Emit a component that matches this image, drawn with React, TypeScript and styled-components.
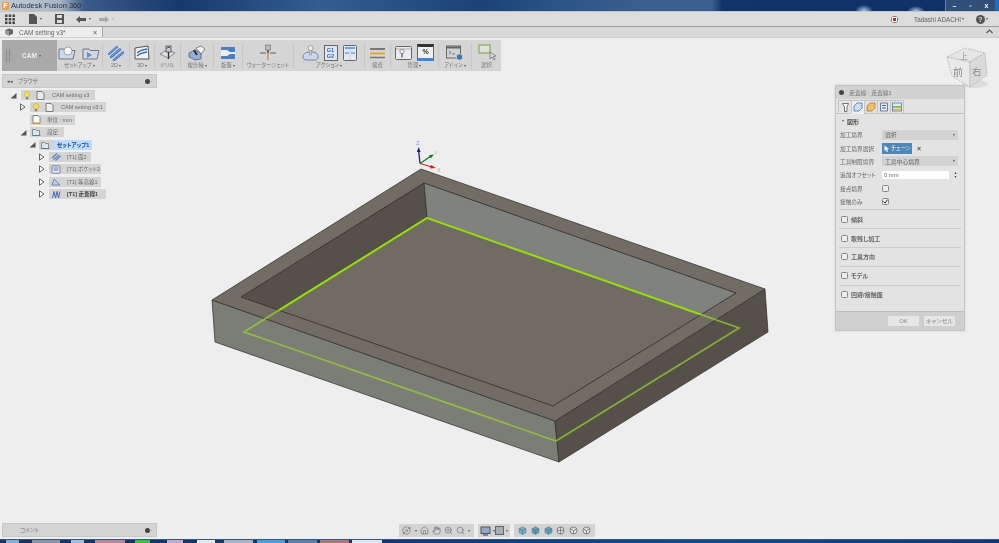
import React from "react";
import styled, { createGlobalStyle } from "styled-components";
import { Hand, Home, Orbit, Search, ZoomIn } from "lucide-react";

const FONT = `"Liberation Sans", "Noto Sans CJK JP", sans-serif`;

const Global = createGlobalStyle`
  html, body { margin: 0; padding: 0; background: #eeeeee; overflow: hidden; }
  * { box-sizing: border-box; }
`;

const Page = styled.div`
  width: 999px;
  height: 543px;
  display: flex;
  flex-direction: column;
  overflow: hidden;
  font-family: ${FONT};
  font-feature-settings: "palt";
  color: #666;
  filter: blur(0.3px);
`;

/* ---------- window chrome ---------- */
const TitleBar = styled.div`
  height: 11px;
  flex: none;
  display: flex;
  align-items: center;
  padding-left: 2px;
  gap: 2px;
  background:
    radial-gradient(ellipse 9px 6px at 864px 11px, #b5cfe6 0, transparent 100%),
    radial-gradient(ellipse 9px 6px at 916px 12px, #cfe0ee 0, transparent 100%),
    linear-gradient(90deg, #c2ccd8 0, #a8b5c5 60px, #3a5a88 85px, #17396c 180px, #345d92 320px, #1c4277 480px, #2c5485 560px, #3a5f8f 640px, #3a5f8f 712px, #12346a 722px, #0f3068 999px);
`;

const AppLogo = styled.span`
  width: 7px;
  height: 8px;
  background: #e9a04a;
  color: #fff;
  font-size: 7px;
  font-weight: bold;
  line-height: 8px;
  text-align: center;
`;

const TitleText = styled.span`
  font-size: 7.5px;
  color: #2b3440;
`;

const WindowButtons = styled.div`
  margin-left: auto;
  width: 50px;
  height: 11px;
  display: flex;
  align-items: center;
  justify-content: space-around;
  background: #2f4f78;
  border-left: 1px solid #6c86a6;
  color: #fff;
  font-size: 7px;
  line-height: 1;
  font-weight: bold;
`;

const WindowSliver = styled.div`
  width: 4px;
  height: 11px;
  margin-left: -2px;
  background: #1f6fc0;
  flex: none;
`;

const QuickBar = styled.div`
  height: 16px;
  flex: none;
  display: flex;
  align-items: center;
  padding: 0 2px 0 5px;
  background: #dcdcdc;
  border-top: 1px solid #c4c4c4;
  border-bottom: 1px solid #9c9c9c;
`;

const QuickSlot = styled.div<{ $w: number }>`
  width: ${(p) => p.$w}px;
  display: flex;
  align-items: center;
  gap: 2px;
  flex: none;
`;

const Caret = styled.span<{ $light?: boolean }>`
  display: inline-block;
  width: 0;
  height: 0;
  border-left: 1.8px solid transparent;
  border-right: 1.8px solid transparent;
  border-top: 2.4px solid ${(p) => (p.$light ? "#aaa" : "#555")};
  margin-left: 1px;
  vertical-align: middle;
`;

const UserArea = styled.div`
  margin-left: auto;
  display: flex;
  align-items: center;
  font-size: 6.3px;
  color: #5f5f5f;
`;

const RecordDot = styled.span`
  width: 7px;
  height: 7px;
  border-radius: 50%;
  background: radial-gradient(circle, #e01a1a 0 1.8px, #fff 2px 2.8px, #777 3px);
  margin-right: 16px;
`;

const HelpDot = styled.span`
  width: 9px;
  height: 9px;
  border-radius: 50%;
  background: #555;
  color: #ddd;
  font-size: 7px;
  line-height: 9px;
  font-weight: bold;
  text-align: center;
  margin-left: 12px;
`;

const UserEnd = styled.span`
  width: 9px;
`;

const TabBar = styled.div`
  height: 11px;
  flex: none;
  display: flex;
  align-items: stretch;
  background: #d9d9d9;
  border-bottom: 1px solid #cfcfcf;
`;

const Tab = styled.div`
  width: 103px;
  display: flex;
  align-items: center;
  padding: 0 2px 0 5px;
  background: #ededed;
  border-right: 1px solid #a8a8a8;
  font-size: 6.5px;
  color: #666;
  gap: 5px;
`;

const TabClose = styled.span`
  margin-left: auto;
  margin-right: 3px;
  font-size: 7px;
  font-weight: bold;
  color: #777;
`;

const TabChevron = styled.div`
  margin-left: auto;
  width: 20px;
  text-align: center;
  svg { display: block; margin: 2px auto 0; }
`;

/* ---------- viewport ---------- */
const Viewport = styled.div`
  flex: 1;
  position: relative;
  background: #eeeeee;
`;

const Scene = styled.svg`
  position: absolute;
  inset: 0;
  width: 100%;
  height: 100%;
`;

const Ribbon = styled.div`
  position: absolute;
  left: 2px;
  top: 2px;
  height: 31px;
  display: flex;
  background: #d5d5d5;
`;

const CamButton = styled.div`
  width: 55px;
  background: #a9a9a9;
  display: flex;
  align-items: center;
  justify-content: center;
  color: #eee;
  font-size: 6.5px;
  font-weight: bold;
  gap: 1px;
  padding-left: 4px;
  position: relative;
  &::before {
    content: "";
    position: absolute;
    left: 4px;
    top: 9px;
    bottom: 9px;
    width: 2px;
    border-left: 1px solid #8a8a8a;
    border-right: 1px solid #8a8a8a;
  }
`;

const Group = styled.div<{ $w: number }>`
  width: ${(p) => p.$w}px;
  height: 26px;
  margin-top: 3px;
  flex: none;
  display: flex;
  flex-direction: column;
  align-items: center;
  border-right: 1px solid #c6c6c6;
  &:last-child { border-right: 0; }
`;

const IconRow = styled.div`
  height: 20px;
  display: flex;
  align-items: center;
  justify-content: center;
  gap: 5px;
`;

const GroupLabel = styled.div`
  font-size: 5.4px;
  line-height: 7px;
  color: #777;
  white-space: nowrap;
`;

const BrowserBar = styled.div<{ $top?: number; $bottom?: number }>`
  position: absolute;
  left: 2px;
  width: 155px;
  height: 14px;
  ${(p) => (p.$top !== undefined ? `top: ${p.$top}px;` : "")}
  ${(p) => (p.$bottom !== undefined ? `bottom: ${p.$bottom}px;` : "")}
  display: flex;
  align-items: center;
  padding: 0 3px 0 4px;
  background: #d4d4d4;
  border: 1px solid #c8c8c8;
  font-size: 5.5px;
  color: #777;
  gap: 5px;
`;

const BarArrows = styled.span`
  font-size: 5px;
  color: #444;
`;

const BarSpacer = styled.span`
  width: 8px;
`;

const PinDot = styled.span`
  margin-left: auto;
  width: 5px;
  height: 5px;
  border-radius: 50%;
  background: #444;
  box-shadow: 4px 0 0 -2px #999;
  margin-right: 3px;
`;

const TitleDot = styled.span`
  width: 5px;
  height: 5px;
  border-radius: 50%;
  background: #444;
`;

const Tree = styled.div`
  position: absolute;
  left: 0;
  top: 52px;
  display: flex;
  flex-direction: column;
  gap: 2.4px;
`;

const Row = styled.div<{ $indent: number }>`
  height: 10px;
  display: flex;
  align-items: center;
  padding-left: ${(p) => p.$indent}px;
`;

const Expander = styled.span<{ $w: number }>`
  width: ${(p) => p.$w}px;
  display: flex;
  justify-content: flex-start;
  flex: none;
`;

const Chip = styled.div<{ $w: number; $gap?: number }>`
  width: ${(p) => p.$w}px;
  height: 10px;
  background: #d4d4d4;
  display: flex;
  align-items: center;
  gap: ${(p) => p.$gap ?? 4}px;
  padding-left: 2px;
  font-size: 5.5px;
  color: #6b6b6b;
  white-space: nowrap;
`;

const ChipText = styled.span<{ $active?: boolean; $bold?: boolean }>`
  margin-left: 2px;
  ${(p) => p.$active && `background:#bddcff;color:#1a3f7a;font-weight:bold;padding:0 3px;height:10px;line-height:10px;margin-left:0;flex:1;`}
  ${(p) => p.$bold && `color:#444;font-weight:bold;`}
`;

/* ---------- parameter panel ---------- */
const Panel = styled.div`
  position: absolute;
  left: 835px;
  top: 47px;
  width: 130px;
  height: 246px;
  display: flex;
  flex-direction: column;
  background: #e3e3e3;
  border: 1px solid #c4c4c4;
  box-shadow: 0 0 2px #ccc;
`;

const PanelTitle = styled.div`
  height: 13px;
  flex: none;
  display: flex;
  align-items: center;
  gap: 5px;
  padding-left: 3px;
  background: #d2d2d2;
  font-size: 5.8px;
  color: #777;
`;

const PanelTabs = styled.div`
  height: 15px;
  flex: none;
  display: flex;
  padding: 1px 0 0 2px;
  border-bottom: 1px solid #c0c0c0;
`;

const PanelTab = styled.div<{ $active?: boolean }>`
  width: 14px;
  height: 14px;
  display: flex;
  align-items: center;
  justify-content: center;
  background: ${(p) => (p.$active ? "#efefef" : "#e3e3e3")};
  border: 1px solid #c4c4c4;
  margin-right: -1px;
  ${(p) => p.$active && "border-bottom-color:#efefef;"}
`;

const SectionHead = styled.div`
  height: 14px;
  display: flex;
  align-items: center;
  gap: 3px;
  padding: 0 0 0 5px;
  font-size: 6px;
  color: #555;
  font-weight: bold;
`;

const FormRow = styled.div`
  height: 13.4px;
  display: grid;
  grid-template-columns: 42px 76px;
  align-items: center;
  padding-left: 4px;
  font-size: 5.7px;
  color: #666;
  white-space: nowrap;
`;

const SelectBox = styled.div`
  height: 10px;
  background: #d2d2d2;
  display: flex;
  align-items: center;
  justify-content: space-between;
  padding: 0 3px;
  font-size: 5.8px;
`;

const ChainCell = styled.div`
  display: flex;
  align-items: center;
  gap: 5px;
`;

const ChainButton = styled.div`
  width: 30px;
  height: 11px;
  background: #4f87b8;
  color: #eef;
  display: flex;
  align-items: center;
  gap: 2px;
  padding-left: 2px;
  font-size: 5.6px;
  white-space: nowrap;
`;

const CrossMark = styled.span`
  font-size: 7px;
  font-weight: bold;
  color: #555;
`;

const OffsetCell = styled.div`
  display: flex;
  align-items: center;
  justify-content: space-between;
`;

const OffsetInput = styled.div`
  width: 67px;
  height: 8px;
  background: #fff;
  padding-left: 2px;
  font-size: 5.8px;
  line-height: 8px;
`;

const Stepper = styled.div`
  width: 5px;
  font-size: 3.5px;
  line-height: 4px;
  color: #444;
  text-align: center;
`;

const Check = styled.div`
  width: 7px;
  height: 7px;
  border: 1px solid #888;
  border-radius: 1.5px;
  background: #ececec;
  display: flex;
  align-items: center;
  justify-content: center;
  flex: none;
`;

const Collapsed = styled.div<{ $first?: boolean }>`
  height: 18.8px;
  margin: 0 3px;
  display: flex;
  align-items: center;
  gap: 3px;
  padding-left: 2px;
  border-top: 1px solid #cdcdcd;
  font-size: 6px;
  font-weight: bold;
  color: #666;
  ${(p) => p.$first && "margin-top: 1px;"}
`;

const PanelFooter = styled.div`
  margin-top: auto;
  height: 19px;
  flex: none;
  display: flex;
  justify-content: flex-end;
  align-items: center;
  gap: 5px;
  padding-right: 9px;
  background: #cfcfcf;
  border-top: 1px solid #bdbdbd;
`;

const FooterButton = styled.div`
  width: 31px;
  height: 10px;
  background: #e6e6e6;
  text-align: center;
  font-size: 6px;
  line-height: 10px;
  color: #8a8a8a;
`;

/* ---------- nav bar and taskbar ---------- */
const NavBar = styled.div`
  position: absolute;
  left: 399px;
  bottom: 2px;
  display: flex;
  gap: 4px;
  svg { display: block; flex: none; }
`;

const NavGroup = styled.div<{ $w: number }>`
  width: ${(p) => p.$w}px;
  height: 13px;
  display: flex;
  align-items: center;
  justify-content: space-around;
  padding: 0 2px;
  background: #d3d3d3;
  color: #5c6670;
`;

const TaskBar = styled.div`
  height: 4px;
  flex: none;
  display: flex;
  background: linear-gradient(90deg, #16345e 0, #123a70 400px, #0f4a8a 700px, #123a70 999px);
  border-top: 1px solid #33557f;
`;

const TaskItem = styled.div<{ $x: number; $w: number; $c: string }>`
  width: ${(p) => p.$w}px;
  margin-left: ${(p) => p.$x}px;
  flex: none;
  background: ${(p) => p.$c};
`;

/* ---------- icons ---------- */
const I = ({ w = 16, h = 16, children }: { w?: number; h?: number; children: React.ReactNode }) => (
  <svg width={w} height={h} viewBox={`0 0 ${w} ${h}`} style={{ display: "block", flex: "none" }}>
    {children}
  </svg>
);

const Bulb = () => (
  <I w={8} h={9}>
    <circle cx="4" cy="3.4" r="2.8" fill="#f3de5a" stroke="#b9a52e" strokeWidth=".5" />
    <rect x="2.8" y="6" width="2.4" height="2.4" fill="#888" />
  </I>
);
const Tri = ({ open }: { open?: boolean }) =>
  open ? (
    <I w={7} h={7}>
      <path d="M6.5 1v5.5H.5z" fill="#555" />
    </I>
  ) : (
    <I w={7} h={8}>
      <path d="M1.5.8 6 4 1.5 7.2z" fill="#fff" stroke="#444" strokeWidth=".8" />
    </I>
  );
const FolderSm = ({ c = "#dfe5ec" }: { c?: string }) => (
  <I w={9} h={8}>
    <path d="M.5 1.5h3l1 1h3v5h-7z" fill={c} stroke="#5a6a80" strokeWidth=".7" />
    <path d="M.5 7.5h8" stroke="#4a78b0" strokeWidth=".8" />
  </I>
);
const Doc = ({ c = "#fff", mark }: { c?: string; mark?: boolean }) => (
  <I w={9} h={9}>
    <path d="M1 .5h5l2 2v6H1z" fill={c} stroke="#555" strokeWidth=".7" />
    {mark && <path d="M1 8h7" stroke="#e2a72e" strokeWidth="1.4" />}
  </I>
);
const Hatch = ({ c = "#4f7fc0" }: { c?: string }) => (
  <I w={10} h={9}>
    <path d="M1 6 6 1.5M2.5 7.5 8 3M4.5 8.500 9.500 4" stroke={c} strokeWidth="1.3" />
  </I>
);

const OpIcon = ({ kind }: { kind: number }) => {
  if (kind === 0) return <Hatch c="#5f86bb" />;
  if (kind === 1)
    return (
      <I w={10} h={9}>
        <rect x="1" y=".8" width="8" height="7.4" rx="1" fill="#eef" stroke="#556" strokeWidth=".7" />
        <path d="M2.500 3h5M2.500 5h5" stroke="#3e78c2" />
      </I>
    );
  if (kind === 2)
    return (
      <I w={10} h={9}>
        <path d="M1 8 3 2l3 3 3 3z" fill="#b7cdea" stroke="#4a70a8" strokeWidth=".7" />
      </I>
    );
  return (
    <I w={10} h={9}>
      <path d="M1.500 8 3 1.500 4.500 8 6 1.500 7.500 8 9 1.500" fill="none" stroke="#3f6fb5" strokeWidth="1" />
    </I>
  );
};

const RFolder = ({ open }: { open?: boolean }) => (
  <I w={19} h={14}>
    <path d="M1 3h6l1.500 1.500H17l-2 8.500H1z" fill={open ? "#c9d9ea" : "#cfd8e4"} stroke="#55606e" strokeWidth=".8" />
    {open ? (
      <circle cx="10" cy="5" r="4" fill="#f6f6f6" stroke="#777" strokeWidth=".6" />
    ) : (
      <path d="M5 6l5 3-5 3z" fill="#5a93cc" />
    )}
  </I>
);
const R2D = () => (
  <I w={16} h={16}>
    <path d="M1 9 9 2M3 12l9-7.500M6 15l9-7.500" stroke="#3c6fc0" strokeWidth="2.300" strokeLinecap="round" />
    <path d="M1 9 9 2M3 12l9-7.500M6 15l9-7.500" stroke="#a4c2ea" strokeWidth=".7" strokeLinecap="round" />
  </I>
);
const R3D = () => (
  <I w={16} h={16}>
    <path d="M1 3 14 1l1 13H1z" fill="#eef2f6" stroke="#555" strokeWidth="1" />
    <path d="M3 8c3-3 6-3 10-4M3 11c3-3 6-3 10-4" fill="none" stroke="#3c6fc0" strokeWidth="1.400" />
  </I>
);
const RDrill = () => (
  <I w={17} h={16}>
    <path d="M1 9l7-4 8 3-7 5z" fill="#dfe4ea" stroke="#666" strokeWidth=".7" />
    <rect x="7" y="1" width="5" height="6" fill="#ccc" stroke="#444" strokeWidth=".8" />
    <path d="M9.500 7v7" stroke="#333" strokeWidth="1.400" />
    <path d="M8 3l3-1" stroke="#345" />
  </I>
);
const RMulti = () => (
  <I w={18} h={16}>
    <path d="M1 8l6-3 6 3v6l-6 1-6-3z" fill="#8fb0dc" stroke="#456" strokeWidth=".7" />
    <path d="M8 3l5-2 4 3-4 5z" fill="#f4f4f4" stroke="#555" strokeWidth=".7" />
    <path d="M6 5l3 5" stroke="#333" strokeWidth="2" />
  </I>
);
const RLathe = () => (
  <I w={16} h={14}>
    <path d="M1 1h14v12H1z" fill="#4a7fc0" />
    <path d="M1 4h6l3 2h5v2h-5L7 10H1z" fill="#e7edf3" />
  </I>
);
const RJet = () => (
  <I w={18} h={17}>
    <path d="M1 9h6M11 9h6" stroke="#888" strokeWidth="1.400" />
    <rect x="6.500" y="1" width="5" height="5" fill="#bbb" stroke="#666" strokeWidth=".6" />
    <path d="M9 6v3" stroke="#666" strokeWidth="2" />
    <path d="M9 9v7" stroke="#d9704d" strokeWidth="1.200" />
  </I>
);
const RAction = () => (
  <I w={17} h={16}>
    <path d="M1 12c0-4 4-5 8-5s7 1 7 5-4 3-8 3-7 0-7-3z" fill="#c8d9ee" stroke="#5a7090" strokeWidth=".8" />
    <rect x="7.500" y="3" width="2" height="7" fill="#ccc" stroke="#777" strokeWidth=".4" />
    <circle cx="8.500" cy="3" r="2.500" fill="#eee" stroke="#777" strokeWidth=".6" />
  </I>
);
const RCode = styled.div`
  width: 14px;
  height: 16px;
  border: 1px solid #666;
  background: #dde6f2;
  color: #3268b8;
  font-size: 5.5px;
  font-weight: bold;
  line-height: 6.5px;
  text-align: center;
  padding-top: 1px;
`;
const RSheet = () => (
  <I w={14} h={16}>
    <rect x=".5" y=".5" width="13" height="15" rx="1" fill="#dfe8f3" stroke="#666" />
    <path d="M2 3h10" stroke="#3f86d6" strokeWidth="1.400" />
    <path d="M2 8h4M8 8h4" stroke="#3f86d6" strokeWidth="1" />
    <path d="M7 4v11" stroke="#bbc" strokeWidth=".5" />
  </I>
);
const RInspect = () => (
  <I w={17} h={12}>
    <path d="M1 2h15" stroke="#777" strokeWidth="2" />
    <path d="M1 6.500h15" stroke="#e2a72e" strokeWidth="2" />
    <path d="M1 10.500h15" stroke="#777" strokeWidth="1.500" />
  </I>
);
const RManage = () => (
  <I w={17} h={15}>
    <rect x=".5" y="1.500" width="16" height="13" rx="1" fill="#e9edf2" stroke="#666" />
    <path d="M1 4h15" stroke="#aaa" />
    <circle cx="7" cy="6.500" r="2.200" fill="#eee" stroke="#777" strokeWidth=".7" />
    <path d="M7 8.500v4" stroke="#555" strokeWidth="1.200" />
  </I>
);
const RPercent = styled.div`
  width: 17px;
  height: 17px;
  border: 1px solid #666;
  border-top: 3px solid #333;
  border-bottom: 3px solid #3f86d6;
  background: #f0f0f0;
  color: #333;
  font-size: 7px;
  font-weight: bold;
  line-height: 10px;
  text-align: center;
`;
const RAddin = () => (
  <I w={18} h={16}>
    <rect x=".5" y="1" width="14" height="12" fill="#cfd3d8" stroke="#666" />
    <path d="M1 2.500h13" stroke="#666" strokeWidth="2" />
    <path d="M3 6l2 1.500L3 9M6 9h3" stroke="#555" strokeWidth=".7" fill="none" />
    <circle cx="13.500" cy="12" r="3.200" fill="#3f74b0" stroke="#eee" strokeWidth=".6" />
  </I>
);
const RSelect = () => (
  <I w={18} h={17}>
    <rect x="1" y="1" width="11" height="8" fill="#e0e0e0" stroke="#86ac5a" strokeWidth="1.200" />
    <path d="M12 8v7l2-2 2 3 1-.5-1.700-3 2.500-.5z" fill="#ddd" stroke="#555" strokeWidth=".6" />
  </I>
);
const NavCube = ({ c }: { c: string }) => (
  <I w={9} h={9}>
    <path d="M4.500.8 8 2.700v3.800L4.500 8.400 1 6.500V2.700z" fill={c} stroke="#667" strokeWidth=".5" />
    <path d="M1 2.700 4.500 4.600 8 2.700M4.500 4.600v3.800" fill="none" stroke="#3f6d80" strokeWidth=".5" />
  </I>
);
const NavWire = ({ cross }: { cross?: boolean }) => (
  <I w={9} h={9}>
    <circle cx="4.500" cy="4.500" r="3.500" fill="#e0e0e0" stroke="#6a6a6a" strokeWidth=".8" />
    {cross ? (
      <path d="M1 4.500h7M4.500 1v7" stroke="#6a6a6a" strokeWidth=".7" />
    ) : (
      <path d="M1.500 3 4.500 4.600 7.500 3M4.500 4.600V8" fill="none" stroke="#6a6a6a" strokeWidth=".7" />
    )}
  </I>
);

const ribbon: { w: number; label: string; caret?: boolean; icons: React.ReactNode }[] = [
  { w: 46, label: "セットアップ", caret: true, icons: <><RFolder open /><RFolder /></> },
  { w: 27, label: "2D", caret: true, icons: <R2D /> },
  { w: 25, label: "3D", caret: true, icons: <R3D /> },
  { w: 26, label: "ドリル", icons: <RDrill /> },
  { w: 33, label: "複合軸", caret: true, icons: <RMulti /> },
  { w: 29, label: "旋盤", caret: true, icons: <RLathe /> },
  { w: 51, label: "ウォータージェット", icons: <RJet /> },
  { w: 71, label: "アクション", caret: true, icons: <><RAction /><RCode>G1<br />G2</RCode><RSheet /></> },
  { w: 26, label: "検査", icons: <RInspect /> },
  { w: 48, label: "管理", caret: true, icons: <><RManage /><RPercent>%</RPercent></> },
  { w: 33, label: "アドイン", caret: true, icons: <RAddin /> },
  { w: 29, label: "選択", icons: <RSelect /> },
];

const operations = [
  { label: "[T1] 面2", w: 42, kind: 0 },
  { label: "[T1] ポケット2", w: 52, kind: 1 },
  { label: "[T1] 等高線1", w: 52, kind: 2 },
  { label: "[T1] 走査線1", w: 57, kind: 3, bold: true },
];

const collapsed = ["傾斜", "取残し加工", "工具方向", "モデル", "回避/接触面"];

const AxisLabel = styled.text`
  font-family: ${FONT};
  font-size: 5.5px;
`;

const CubeLabel = styled.text`
  font-family: "Noto Sans CJK JP", sans-serif;
  fill: #8c8c8c;
`;

const SceneArt = () => (
  <Scene viewBox="0 38 999 501">
    <defs>
      <clipPath id="pocket">
        <polygon points="424,183 736,293 553,406 241,297" />
      </clipPath>
    </defs>
    {/* outer side faces */}
    <polygon points="212,300 555,421 559,462 215,342" fill="#7b7d77" stroke="#2e2c28" strokeWidth=".7" />
    <polygon points="555,421 765,289 768,332 559,462" fill="#55514a" stroke="#2e2c28" strokeWidth=".7" />
    {/* rim */}
    <polygon points="421,169 765,289 555,421 212,300" fill="#716d65" stroke="#2e2c28" strokeWidth=".7" />
    {/* pocket */}
    <g clipPath="url(#pocket)">
      <polygon points="424,183 241,297 244,332 427,218" fill="#55514a" />
      <polygon points="424,183 736,293 739,328 427,218" fill="#80837d" />
      <polygon points="427,218 739,328 556,441 244,332" fill="#706c64" />
      <path d="M424 183 427 218" stroke="#2e2c28" strokeWidth=".8" />
    </g>
    <polygon points="424,183 736,293 553,406 241,297" fill="none" stroke="#2e2c28" strokeWidth=".8" />
    {/* tool boundary */}
    <polygon points="427,218 739,328 556,441 244,332" fill="none" stroke="#9cd42a" strokeWidth="1.800" opacity=".7" />
    <g clipPath="url(#pocket)">
      <path d="M244 332 427 218 739 328" fill="none" stroke="#93e000" strokeWidth="1.800" />
    </g>
    {/* axis triad */}
    <path d="M420 163.500 418.700 151" stroke="#1c1c8c" strokeWidth="1.300" />
    <path d="M418.700 147 416.800 152h3.800z" fill="#1c1c8c" />
    <path d="M420 163.500 431 156" stroke="#0d7a1f" strokeWidth="1.300" />
    <path d="M434 154.500 428.800 155.300l2 3z" fill="#0d7a1f" />
    <path d="M420 163.500 432 167" stroke="#cc2222" strokeWidth="1.300" />
    <path d="M436 168 431 165l-1 3.500z" fill="#cc2222" />
    <AxisLabel x="416.300" y="144.500" fill="#8a8ae0">Z</AxisLabel>
    <AxisLabel x="434" y="155" fill="#8fe09a">Y</AxisLabel>
    <AxisLabel x="437" y="171.500" fill="#f09090">X</AxisLabel>
    {/* view cube */}
    <ellipse cx="975" cy="84" rx="13" ry="4" fill="#dcdcdc" />
    <polygon points="965,48 985,53 970,62 947,57" fill="#e6e6e6" stroke="#b4b4b4" strokeWidth=".8" strokeDasharray="2 1" />
    <polygon points="947,57 970,62 970,87 952,76" fill="#e9e9e9" stroke="#b4b4b4" strokeWidth=".8" strokeDasharray="2 1" />
    <polygon points="970,62 985,53 987,75 970,87" fill="#dadada" stroke="#b4b4b4" strokeWidth=".8" strokeDasharray="2 1" />
    <CubeLabel x="953" y="76" fontSize="10">前</CubeLabel>
    <CubeLabel x="972" y="75" fontSize="9.500">右</CubeLabel>
    <CubeLabel x="960" y="59" fontSize="8">上</CubeLabel>
  </Scene>
);

export default function App() {
  return (
    <Page>
      <Global />
      <TitleBar>
        <AppLogo>F</AppLogo>
        <TitleText>Autodesk Fusion 360</TitleText>
        <WindowButtons>
          <span>–</span>
          <span>▫</span>
          <span>x</span>
        </WindowButtons>
        <WindowSliver />
      </TitleBar>

      <QuickBar>
        <QuickSlot $w={24}>
          <I w={10} h={10}>
            <path d="M0 .5h2.500v2.500H0zM3.700.5h2.500v2.500H3.700zM7.400.5h2.500v2.500H7.400zM0 4h2.500v2.500H0zM3.700 4h2.500v2.500H3.700zM7.400 4h2.500v2.500H7.400zM0 7.500h2.500V10H0zM3.700 7.500h2.500V10H3.700zM7.400 7.500h2.500V10H7.400z" fill="#444" />
          </I>
        </QuickSlot>
        <QuickSlot $w={26}>
          <I w={8} h={10}>
            <path d="M0 0h5l3 3v7H0z" fill="#555" />
          </I>
          <Caret />
        </QuickSlot>
        <QuickSlot $w={21}>
          <I w={9} h={10}>
            <path d="M0 0h9v10H0z" fill="#555" />
            <path d="M2 1h5v3H2zM2 6h5v3H2z" fill="#ddd" />
          </I>
        </QuickSlot>
        <QuickSlot $w={23}>
          <I w={10} h={7}>
            <path d="M0 3.500 4 0v2h6v3H4v2z" fill="#555" />
          </I>
          <Caret />
        </QuickSlot>
        <QuickSlot $w={24}>
          <I w={10} h={7}>
            <path d="M10 3.500 6 0v2H0v3h6v2z" fill="#aaa" />
          </I>
          <Caret $light />
        </QuickSlot>
        <UserArea>
          <RecordDot />
          Tadashi ADACHI
          <Caret />
          <HelpDot>?</HelpDot>
          <Caret />
          <UserEnd />
        </UserArea>
      </QuickBar>

      <TabBar>
        <Tab>
          <I w={9} h={8}>
            <path d="M.5 2 4 .5l4 1.200v4L4 7.500.5 6z" fill="#666" />
            <path d="M4 3v4.500L.5 6V2z" fill="#999" />
          </I>
          CAM setting v3*
          <TabClose>×</TabClose>
        </Tab>
        <TabChevron>
          <I w={7} h={5}>
            <path d="M.5 4 3.500 1l3 3" fill="none" stroke="#555" strokeWidth="1.200" />
          </I>
        </TabChevron>
      </TabBar>

      <Viewport>
        <SceneArt />

        <Ribbon>
          <CamButton>
            CAM <Caret />
          </CamButton>
          {ribbon.map((g) => (
            <Group key={g.label} $w={g.w}>
              <IconRow>{g.icons}</IconRow>
              <GroupLabel>
                {g.label}
                {g.caret && <Caret />}
              </GroupLabel>
            </Group>
          ))}
        </Ribbon>

        <BrowserBar $top={36}>
          <BarArrows>◂◂</BarArrows>
          ブラウザ
          <PinDot />
        </BrowserBar>

        <Tree>
          <Row $indent={9.5}>
            <Expander $w={11.5}><Tri open /></Expander>
            <Chip $w={74} $gap={5}>
              <Bulb />
              <Doc c="#e8e8e8" />
              <ChipText>CAM setting v3</ChipText>
            </Chip>
          </Row>
          <Row $indent={18.5}>
            <Expander $w={11.5}><Tri /></Expander>
            <Chip $w={76} $gap={5}>
              <Bulb />
              <Doc c="#eeeeee" />
              <ChipText>CAM setting v3:1</ChipText>
            </Chip>
          </Row>
          <Row $indent={30}>
            <Chip $w={45}>
              <Doc mark />
              <ChipText>単位 : mm</ChipText>
            </Chip>
          </Row>
          <Row $indent={19.5}>
            <Expander $w={10.5}><Tri open /></Expander>
            <Chip $w={34}>
              <FolderSm />
              <ChipText>設定</ChipText>
            </Chip>
          </Row>
          <Row $indent={28.5}>
            <Expander $w={10.5}><Tri open /></Expander>
            <Chip $w={51}>
              <FolderSm />
              <ChipText $active>セットアップ1</ChipText>
            </Chip>
          </Row>
          {operations.map((op) => (
            <Row $indent={37.5} key={op.label}>
              <Expander $w={11.5}><Tri /></Expander>
              <Chip $w={op.w}>
                <OpIcon kind={op.kind} />
                <ChipText $bold={op.bold}>{op.label}</ChipText>
              </Chip>
            </Row>
          ))}
        </Tree>

        <Panel>
          <PanelTitle>
            <TitleDot />
            走査線 : 走査線1
          </PanelTitle>
          <PanelTabs>
            <PanelTab>
              <I w={7} h={9}>
                <path d="M.5.500h6L5 4v4.500H2.500V4z" fill="#fff" stroke="#444" strokeWidth=".7" />
              </I>
            </PanelTab>
            <PanelTab $active>
              <I w={10} h={10}>
                <path d="M1 4l3-3h5v5L6 9H1z" fill="#cfe0f2" stroke="#3f74b0" strokeWidth=".8" />
              </I>
            </PanelTab>
            <PanelTab>
              <I w={10} h={10}>
                <path d="M1 4l3-3h5v5L6 9H1z" fill="#f0c070" stroke="#a77a2a" strokeWidth=".8" />
              </I>
            </PanelTab>
            <PanelTab>
              <I w={10} h={10}>
                <path d="M1.500 1h7v8h-7z" fill="#dfe8f3" stroke="#4a6a90" strokeWidth=".8" />
                <path d="M3 3.500h4M3 6h4" stroke="#345" strokeWidth=".8" />
              </I>
            </PanelTab>
            <PanelTab>
              <I w={10} h={10}>
                <rect x=".5" y="1" width="9" height="8" fill="#dfe8f3" stroke="#4a6a90" strokeWidth=".7" />
                <path d="M1 5h8" stroke="#4aa83a" strokeWidth="1.300" />
                <path d="M1 7.500h8" stroke="#e2b02e" strokeWidth="1.300" />
              </I>
            </PanelTab>
          </PanelTabs>

          <SectionHead>
            <Caret /> 図形
          </SectionHead>
          <FormRow>
            加工境界
            <SelectBox>選択 <Caret /></SelectBox>
          </FormRow>
          <FormRow>
            加工境界選択
            <ChainCell>
              <ChainButton>
                <I w={5} h={7}>
                  <path d="M.5.500v5.500l1.400-1.300L3 7l1-.5-1-2.200 2-.2z" fill="#fff" />
                </I>
                チェーン
              </ChainButton>
              <CrossMark>×</CrossMark>
            </ChainCell>
          </FormRow>
          <FormRow>
            工具制限境界
            <SelectBox>工具中心境界 <Caret /></SelectBox>
          </FormRow>
          <FormRow>
            追加オフセット
            <OffsetCell>
              <OffsetInput>0 mm</OffsetInput>
              <Stepper>▲<br />▼</Stepper>
            </OffsetCell>
          </FormRow>
          <FormRow>
            接点境界
            <Check />
          </FormRow>
          <FormRow>
            接触のみ
            <Check>
              <I w={5} h={5}>
                <path d="M.5 2.500 2 4.200 4.700.5" fill="none" stroke="#333" strokeWidth="1" />
              </I>
            </Check>
          </FormRow>

          {collapsed.map((name, i) => (
            <Collapsed key={name} $first={i === 0}>
              <Check />
              {name}
            </Collapsed>
          ))}

          <PanelFooter>
            <FooterButton>OK</FooterButton>
            <FooterButton>キャンセル</FooterButton>
          </PanelFooter>
        </Panel>

        <BrowserBar $bottom={2}>
          <BarSpacer />
          コメント
          <PinDot />
        </BrowserBar>

        <NavBar>
          <NavGroup $w={75}>
            <Orbit size={9} strokeWidth={1.6} />
            <Caret />
            <Home size={9} strokeWidth={1.6} />
            <Hand size={9} strokeWidth={1.6} />
            <ZoomIn size={9} strokeWidth={1.6} />
            <Search size={9} strokeWidth={1.6} />
            <Caret />
          </NavGroup>
          <NavGroup $w={32}>
            <I w={11} h={10}>
              <rect x="1" y="1" width="9" height="6.500" fill="#8fa8c8" stroke="#555" />
              <path d="M3 9h5" stroke="#555" strokeWidth="1.200" />
            </I>
            <Caret />
            <I w={9} h={9}>
              <rect x=".5" y=".5" width="8" height="8" fill="#a8adb3" stroke="#666" />
            </I>
            <Caret />
          </NavGroup>
          <NavGroup $w={81}>
            <NavCube c="#6fb0cc" />
            <NavCube c="#5f9cb4" />
            <NavCube c="#5fa4bc" />
            <NavWire cross />
            <NavWire />
            <NavWire />
          </NavGroup>
        </NavBar>
      </Viewport>

      <TaskBar>
        <TaskItem $x={6} $w={13} $c="#7fb0d0" />
        <TaskItem $x={13} $w={28} $c="#8b96a3" />
        <TaskItem $x={11} $w={13} $c="#9fc0dc" />
        <TaskItem $x={11} $w={30} $c="#b08a94" />
        <TaskItem $x={10} $w={15} $c="#3cc04a" />
        <TaskItem $x={17} $w={16} $c="#c8a8d0" />
        <TaskItem $x={14} $w={18} $c="#e8e8e8" />
        <TaskItem $x={9} $w={29} $c="#a8b4c2" />
        <TaskItem $x={4} $w={28} $c="#4aa0d8" />
        <TaskItem $x={3} $w={29} $c="#5a80a8" />
        <TaskItem $x={3} $w={29} $c="#a87880" />
        <TaskItem $x={3} $w={30} $c="#dfe6ec" />
      </TaskBar>
    </Page>
  );
}
